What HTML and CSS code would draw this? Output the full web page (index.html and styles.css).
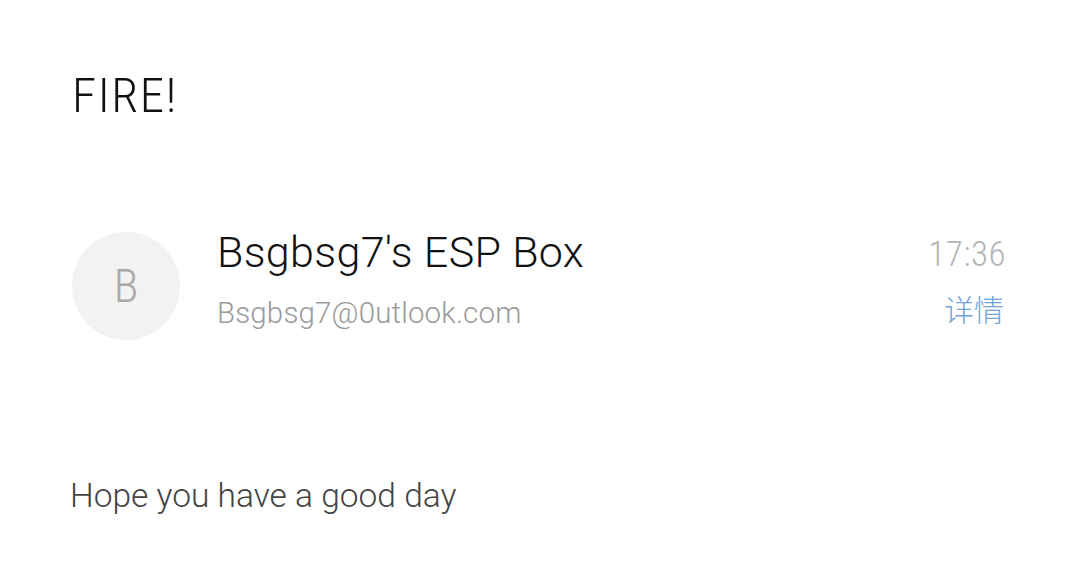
FILE: index.html
```html
<!DOCTYPE html>
<html lang="zh-CN">
<head>
<meta charset="utf-8">
<title>FIRE!</title>
<link rel="stylesheet" href="styles.css">
</head>
<body>
<main class="mail">
  <h1 class="subject">FIRE!</h1>
  <section class="sender">
    <div class="avatar">B</div>
    <div class="sender-info">
      <div class="sender-name">Bsgbsg7's ESP Box</div>
      <div class="sender-email">Bsgbsg7@0utlook.com</div>
    </div>
    <div class="sender-meta">
      <div class="time">17:36</div>
      <a class="details">详情</a>
    </div>
  </section>
  <p class="body-text">Hope you have a good day</p>
</main>
</body>
</html>
```
FILE: styles.css
```css
html, body {
  margin: 0;
  padding: 0;
  background: #ffffff;
}

body {
  font-family: Roboto, "Noto Sans CJK SC", sans-serif;
}

.mail {
  display: flex;
  flex-direction: column;
  padding: 66px 73px 0 72px;
}

.subject {
  margin: 0;
  font-size: 49px;
  line-height: 60px;
  font-weight: 300;
  font-stretch: 75%;
  letter-spacing: 1.6px;
  color: #111111;
}

.sender {
  display: flex;
  align-items: flex-start;
  margin-top: 101px;
}

.avatar {
  flex: none;
  width: 108px;
  height: 108px;
  margin-top: 5px;
  border-radius: 50%;
  background: #f2f2f2;
  color: #a9a9a9;
  font-size: 46px;
  font-weight: 300;
  font-stretch: 75%;
  display: flex;
  align-items: center;
  justify-content: center;
}

.sender-info {
  flex: 1;
  margin-left: 37px;
  display: flex;
  flex-direction: column;
}

.sender-name {
  font-size: 43px;
  line-height: 50px;
  font-weight: 300;
  letter-spacing: 0.35px;
  color: #111111;
}

.sender-email {
  margin-top: 18px;
  font-size: 29.5px;
  line-height: 36px;
  font-weight: 300;
  letter-spacing: 0.15px;
  color: #9a9a9a;
}

.sender-meta {
  flex: none;
  margin-top: 8px;
  margin-right: 1px;
  display: flex;
  flex-direction: column;
  align-items: flex-end;
}

.time {
  font-size: 35px;
  line-height: 40px;
  font-weight: 300;
  font-stretch: 75%;
  letter-spacing: 0.5px;
  color: #b5b5b5;
}

.details {
  margin-top: 18px;
  margin-right: 2px;
  font-size: 30px;
  line-height: 36px;
  font-weight: 300;
  color: #74a3d8;
  cursor: pointer;
}

.body-text {
  margin: 134px 0 0 -2px;
  font-size: 33.5px;
  line-height: 44px;
  font-weight: 300;
  color: #444444;
}
```
